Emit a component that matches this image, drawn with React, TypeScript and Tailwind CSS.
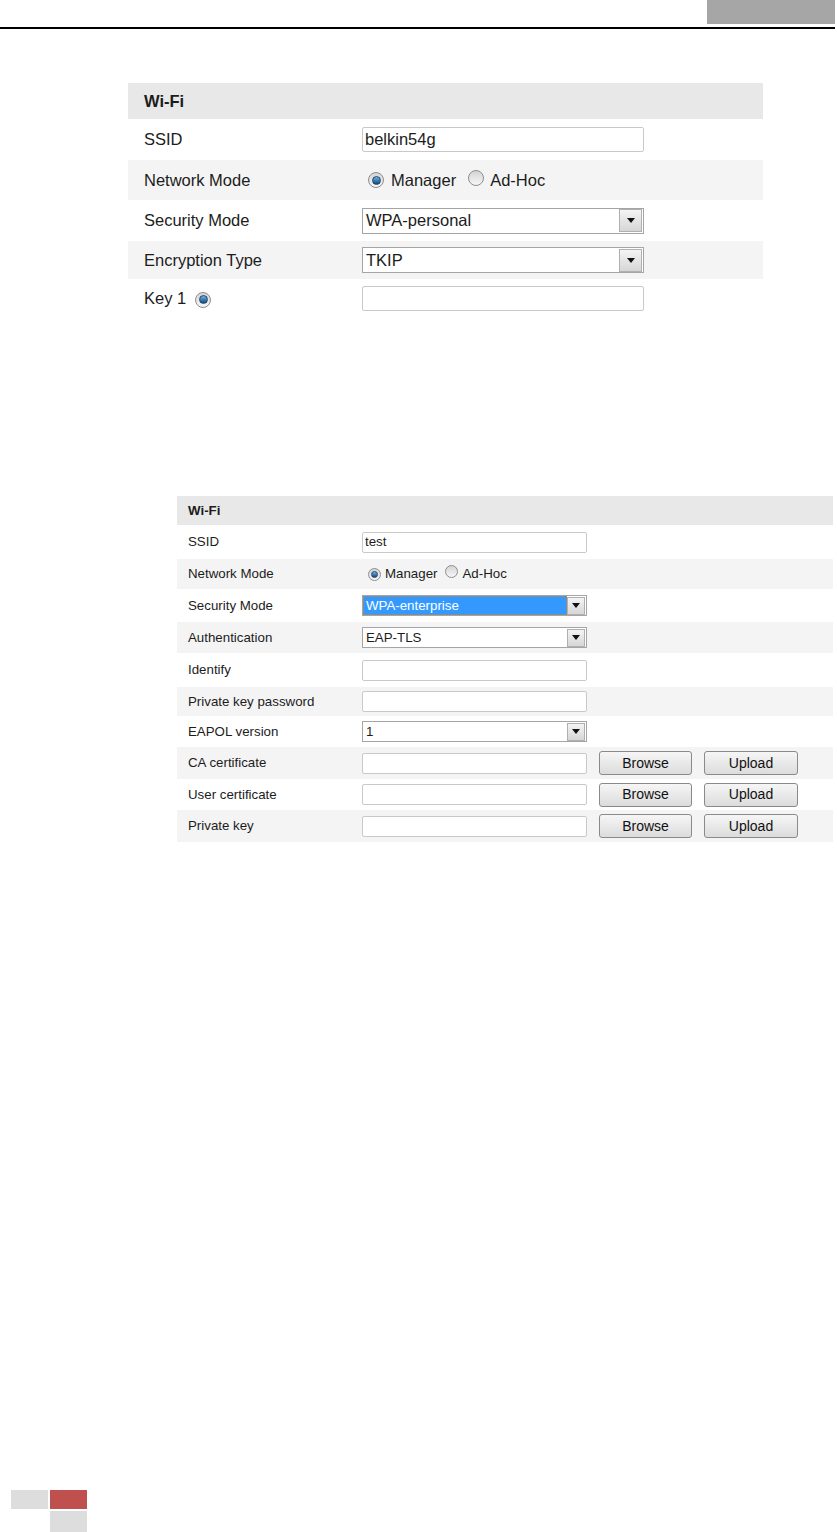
import React from "react";

const font = { fontFamily: '"Liberation Sans", Arial, sans-serif' };

function Radio({ on, size = 14 }: { on?: boolean; size?: number }) {
  return (
    <span
      className="inline-flex items-center justify-center rounded-full border border-[#8e8e8e] bg-gradient-to-b from-[#d4d4d4] to-[#f7f7f7] flex-shrink-0"
      style={{ width: size, height: size }}
    >
      {on && (
        <span
          className="rounded-full bg-gradient-to-b from-[#6fb3e8] to-[#174a7a] border border-[#1a4670]"
          style={{ width: Math.round(size * 0.55), height: Math.round(size * 0.55) }}
        />
      )}
    </span>
  );
}

function TextBox({ w, h, value, text }: { w: number; h: number; value?: string; text: string }) {
  return (
    <div
      className={`flex items-center border border-[#c9c9c9] rounded-[2px] bg-white pl-[2px] ${text}`}
      style={{ width: w, height: h }}
    >
      {value}
    </div>
  );
}

function Select({
  w,
  h,
  value,
  text,
  highlight,
}: {
  w: number;
  h: number;
  value: string;
  text: string;
  highlight?: boolean;
}) {
  const btn = h - 3;
  return (
    <div className={`flex items-center border border-[#a5a5a5] bg-white ${text}`} style={{ width: w, height: h }}>
      <div
        className={`flex-1 h-full flex items-center pl-[3px] ${
          highlight ? "bg-[#3399ff] text-white outline outline-1 outline-dotted outline-[#c9852c] -outline-offset-1" : ""
        }`}
      >
        {value}
      </div>
      <div
        className="flex items-center justify-center border border-[#b0b0b0] bg-gradient-to-b from-[#f4f4f4] to-[#d6d6d6] mr-[1px]"
        style={{ width: btn, height: btn }}
      >
        <svg width="8" height="5" viewBox="0 0 8 5">
          <path d="M0 0h8L4 5z" fill="#111" />
        </svg>
      </div>
    </div>
  );
}

function Btn({ label, w }: { label: string; w: number }) {
  return (
    <div
      className="flex items-center justify-center h-[24px] border border-[#8a8a8a] rounded-[3px] bg-gradient-to-b from-[#f6f6f6] to-[#dcdcdc] text-[14px] text-[#111]"
      style={{ width: w }}
    >
      {label}
    </div>
  );
}

function PanelOne() {
  const label = "text-[16.5px] text-[#1c1c1c]";
  return (
    <div className="ml-[128px] w-[635px] mt-[54px]">
      <div className="h-[36px] bg-[#e8e8e8] flex items-center pl-[16px] text-[16.5px] font-bold text-[#1c1c1c]">
        Wi-Fi
      </div>
      <div className="h-[41px] flex items-center">
        <div className={`w-[234px] pl-[16px] ${label}`}>SSID</div>
        <TextBox w={282} h={25} value="belkin54g" text="text-[16.5px] text-[#1c1c1c]" />
      </div>
      <div className="h-[40px] flex items-center bg-[#f4f4f4]">
        <div className={`w-[234px] pl-[16px] ${label}`}>Network Mode</div>
        <div className={`flex items-center pl-[6px] ${label}`}>
          <Radio on size={16} />
          <span className="ml-[7px]">Manager</span>
          <span className="ml-[12px]">
            <Radio size={16} />
          </span>
          <span className="ml-[6px]">Ad-Hoc</span>
        </div>
      </div>
      <div className="h-[41px] flex items-center">
        <div className={`w-[234px] pl-[16px] ${label}`}>Security Mode</div>
        <Select w={282} h={26} value="WPA-personal" text="text-[16.5px] text-[#1c1c1c]" />
      </div>
      <div className="h-[38px] flex items-center bg-[#f4f4f4]">
        <div className={`w-[234px] pl-[16px] ${label}`}>Encryption Type</div>
        <Select w={282} h={26} value="TKIP" text="text-[16.5px] text-[#1c1c1c]" />
      </div>
      <div className="h-[39px] flex items-center">
        <div className={`w-[234px] pl-[16px] flex items-center ${label}`}>
          <span>Key 1</span>
          <span className="ml-[9px]">
            <Radio on size={16} />
          </span>
        </div>
        <TextBox w={282} h={25} text="text-[16.5px]" />
      </div>
    </div>
  );
}

type Row = { label: string; h: number; kind: "text" | "select" | "radio" | "file"; value?: string; hl?: boolean };

const rows: Row[] = [
  { label: "SSID", h: 34, kind: "text", value: "test" },
  { label: "Network Mode", h: 30, kind: "radio" },
  { label: "Security Mode", h: 33, kind: "select", value: "WPA-enterprise", hl: true },
  { label: "Authentication", h: 31, kind: "select", value: "EAP-TLS" },
  { label: "Identify", h: 34, kind: "text" },
  { label: "Private key password", h: 29, kind: "text" },
  { label: "EAPOL version", h: 31, kind: "select", value: "1" },
  { label: "CA certificate", h: 32, kind: "file" },
  { label: "User certificate", h: 31, kind: "file" },
  { label: "Private key", h: 32, kind: "file" },
];

function PanelTwo() {
  const text = "text-[13.3px] text-[#1c1c1c]";
  return (
    <div className="ml-[177px] w-[656px] mt-[178px]">
      <div className="h-[29px] bg-[#e8e8e8] flex items-center pl-[11px] text-[13.3px] font-bold text-[#1c1c1c]">
        Wi-Fi
      </div>
      {rows.map((r, i) => (
        <div
          key={r.label}
          className={`flex items-center ${i % 2 === 1 ? "bg-[#f4f4f4]" : ""}`}
          style={{ height: r.h }}
        >
          <div className={`w-[185px] pl-[11px] ${text}`}>{r.label}</div>
          {r.kind === "text" && <TextBox w={225} h={21} value={r.value} text={text} />}
          {r.kind === "select" && <Select w={225} h={21} value={r.value!} text={text} highlight={r.hl} />}
          {r.kind === "radio" && (
            <div className={`flex items-center pl-[6px] ${text}`}>
              <Radio on size={13} />
              <span className="ml-[4px]">Manager</span>
              <span className="ml-[8px]">
                <Radio size={13} />
              </span>
              <span className="ml-[4px]">Ad-Hoc</span>
            </div>
          )}
          {r.kind === "file" && (
            <div className="flex items-center">
              <TextBox w={225} h={21} text={text} />
              <div className="ml-[12px]">
                <Btn label="Browse" w={93} />
              </div>
              <div className="ml-[12px]">
                <Btn label="Upload" w={94} />
              </div>
            </div>
          )}
        </div>
      ))}
    </div>
  );
}

export default function App() {
  return (
    <div className="w-[837px] h-[1532px] bg-white overflow-hidden" style={font}>
      {/* page header */}
      <div className="h-[27px] flex justify-end pr-[2px]">
        <div className="w-[128px] h-[24px] bg-[#a6a6a6]" />
      </div>
      <div className="w-[835px] h-[2px] bg-black" />

      <PanelOne />
      <PanelTwo />

      {/* page footer marks */}
      <div className="mt-[648px] ml-[11px] flex gap-[2px]">
        <div className="w-[37px] h-[19px] bg-[#dddddd]" />
        <div className="flex flex-col gap-[2px]">
          <div className="w-[37px] h-[19px] bg-[#c0504d]" />
          <div className="w-[37px] h-[21px] bg-[#dddddd]" />
        </div>
      </div>
    </div>
  );
}
